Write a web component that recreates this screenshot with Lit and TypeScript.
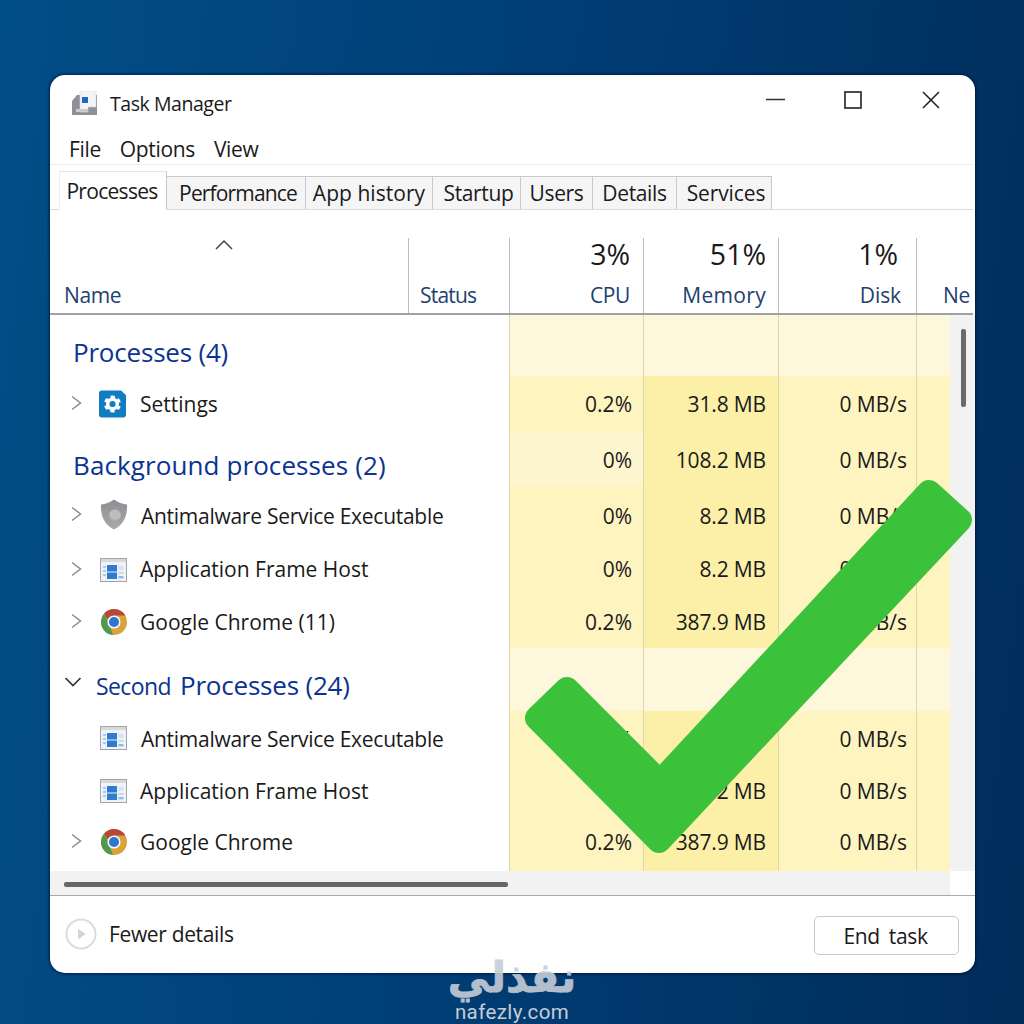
import { LitElement, html, css } from "lit";
import { customElement } from "lit/decorators.js";

const frameIcon = html`<svg class="ico" viewBox="0 0 27 24" width="27" height="24">
  <rect x="0" y="0" width="27" height="24" fill="#a3a5a8"/>
  <rect x="1" y="4" width="25" height="19" fill="#eef3f8"/>
  <rect x="1" y="1" width="25" height="3" fill="#d9d9d9"/>
  <rect x="7" y="7" width="10" height="6.5" fill="#2f7bd1"/>
  <rect x="7" y="14.5" width="10" height="6.5" fill="#2f7bd1"/>
  <rect x="3" y="8" width="3" height="2" fill="#a9cbec"/><rect x="3" y="12" width="3" height="2" fill="#a9cbec"/><rect x="3" y="16" width="3" height="2" fill="#a9cbec"/>
  <rect x="18.5" y="8" width="5" height="4" fill="#d6e4f2"/><rect x="18.5" y="14" width="5" height="2" fill="#c4d9ee"/><rect x="18.5" y="18" width="5" height="2.4" fill="#8fbbe6"/>
</svg>`;

const chromeIcon = html`<svg class="ico" viewBox="0 0 28 28" width="28" height="28">
  <circle cx="14" cy="14" r="13" fill="#d9a23a"/>
  <path d="M14 1A13 13 0 0 1 25.3 7.5L14 7.5 7.2 11 4.2 5.5A13 13 0 0 1 14 1Z" fill="#b5483a"/>
  <path d="M4.2 5.5 9.5 17.5 13 27A13 13 0 0 1 4.2 5.5Z" fill="#4f9a50"/>
  <circle cx="14" cy="14" r="6.6" fill="#f4f6f8"/>
  <circle cx="14" cy="14" r="5" fill="#2f74cf"/>
</svg>`;

const settingsIcon = html`<svg class="ico set" viewBox="0 0 28 28" width="27" height="28">
  <path d="M3 0H23L28 5V25a3 3 0 0 1-3 3H3a3 3 0 0 1-3-3V3a3 3 0 0 1 3-3Z" fill="#0f7cc4"/>
  <g transform="rotate(30 14 14)"><circle cx="14" cy="14" r="7.4" fill="none" stroke="#fff" stroke-width="2.8" stroke-dasharray="4.2 3.55" stroke-dashoffset="2.1"/></g>
  <circle cx="14" cy="14" r="5" fill="none" stroke="#fff" stroke-width="3.6"/>
</svg>`;

const shieldIcon = html`<svg class="ico" viewBox="0 0 28 31" width="28" height="31">
  <defs><linearGradient id="sh" x1="0" y1="0" x2="0" y2="1"><stop offset="0" stop-color="#8d8f92"/><stop offset="1" stop-color="#a8a9ab"/></linearGradient></defs>
  <path d="M14 0C18 3 23 4.500 27 5C27.500 16 24 25 14 30C4 25 .5 16 1 5C5 4.500 10 3 14 0Z" fill="url(#sh)"/>
  <circle cx="15" cy="15.500" r="5.800" fill="#bcbdbe"/>
  <path d="M9.500 17.500a6 6 0 0 0 11 0a7 7 0 0 1-11 0Z" fill="#a9aaac"/>
</svg>`;

const chevR = html`<svg class="chev" viewBox="0 0 12 16" width="12" height="16"><path d="M2 1.500 10.500 8 2 14.500" fill="none" stroke="#8a8a8a" stroke-width="1.500"/></svg>`;
const chevD = html`<svg class="chev" viewBox="0 0 18 12" width="18" height="12"><path d="M1.500 2 9 9.500 16.500 2" fill="none" stroke="#333" stroke-width="1.700"/></svg>`;

interface Row { icon?: unknown; name?: string; chev?: boolean; cpu?: string; mem?: string; disk?: string; tone?: string; adj?: string; tight?: boolean; }

const rows: Row[] = [
  { tone: "group", name: "Processes (4)" },
  { icon: settingsIcon, chev: true, name: "Settings", cpu: "0.2%", mem: "31.8 MB", disk: "0 MB/s" },
  { tone: "group2", adj: "a1", name: "Background processes (2)", cpu: "0%", mem: "108.2 MB", disk: "0 MB/s" },
  { icon: shieldIcon, chev: true, adj: "a1", tight: true, name: "Antimalware Service Executable", cpu: "0%", mem: "8.2 MB", disk: "0 MB/s" },
  { icon: frameIcon, chev: true, adj: "a2", name: "Application Frame Host", cpu: "0%", mem: "8.2 MB", disk: "0 MB/s" },
  { icon: chromeIcon, chev: true, name: "Google Chrome (11)", cpu: "0.2%", mem: "387.9 MB", disk: "0 MB/s" },
  { tone: "second" },
  { icon: frameIcon, adj: "a1", tight: true, name: "Antimalware Service Executable", cpu: "0%", mem: "8.2 MB", disk: "0 MB/s" },
  { icon: frameIcon, name: "Application Frame Host", cpu: "0%", mem: "8.2 MB", disk: "0 MB/s" },
  { icon: chromeIcon, chev: true, adj: "a3", name: "Google Chrome", cpu: "0.2%", mem: "387.9 MB", disk: "0 MB/s" },
];

@customElement("app-root")
export class AppRoot extends LitElement {
  static styles = css`
    :host {
      display: block; position: relative; width: 1024px; height: 1024px; overflow: hidden; box-sizing: border-box;
      padding: 75px 49px 51px 50px;
      background: linear-gradient(97deg, #024e88 0%, #01467f 25%, #003a70 60%, #002d5a 100%);
      font-family: "Open Sans", "Noto Sans", sans-serif; color: #1a1a1a; font-size: 21px; letter-spacing: -0.35px;
    }
    .win { width: 925px; height: 898px; background: #fff; border-radius: 15px; overflow: hidden; display: flex; flex-direction: column; box-shadow: 0 0 3px 1px rgba(0, 10, 50, .7); }
    .title { height: 55px; flex: none; display: flex; align-items: center; padding: 2px 35px 0 22px; box-sizing: border-box; font-size: 19.5px; letter-spacing: -0.45px; }
    .title .app { margin: -2px 13px 0 0; }
    .title .caps { margin-left: auto; display: flex; gap: 60px; align-items: center; margin-top: -7px; }
    .title .caps .min { margin-right: -2px; }
    .menu { height: 35px; flex: none; box-sizing: border-box; display: flex; gap: 19px; padding: 3px 0 0 19px; align-items: center; border-bottom: 1px solid #ececec; margin-right: 2px; }
    .tabs { height: 45px; flex: none; box-sizing: border-box; border-bottom: 1px solid #dcdcdc; display: grid; grid-template-columns: 108px 139px 127px 88px 72px 84px 95px; padding-left: 9px; align-items: end; margin-right: 2px; }
    .tab { height: 33px; box-sizing: border-box; background: #f5f5f5; border: 1px solid #c8c8c8; border-bottom: 0; border-left-width: 0; display: flex; align-items: center; justify-content: center; padding-bottom: 1px; }
    .tab.on { background: #fff; border: 0; border-top: 1px solid #e6e6e6; border-right: 1px solid #c8c8c8; border-left: 1px solid #eee; margin-bottom: -1px; padding: 0 2px 0 0; height: 39px; letter-spacing: -0.7px; }
    .tab.t1 { letter-spacing: -0.85px; padding-left: 4px; }
    .tab.t2 { letter-spacing: 0.05px; }
    .tab.t3 { padding-left: 4px; }
    .tab.t6 { letter-spacing: -0.1px; padding-left: 4px; }
    .head { height: 105px; flex: none; box-sizing: border-box; padding-top: 28px; margin-right: 2px; }
    .hgrid { display: grid; grid-template-columns: 358px 101px 134px 135px 138px 55px; height: 77px; border-bottom: 2px solid #a0a0a6; box-sizing: border-box; }
    .hc { position: relative; border-left: 1px solid #bdbdbd; display: flex; flex-direction: column; align-items: flex-end; justify-content: flex-end; padding: 0 13px 3px 0; box-sizing: border-box; }
    .hc:first-child { border-left: 0; align-items: flex-start; padding-left: 14px; }
    .hc .lab { color: #22406f; line-height: 30px; }
    .hc .pct { font-size: 28.5px; line-height: 32px; color: #1a1a1a; margin-bottom: 10px; letter-spacing: 0; }
    .hc.st { align-items: flex-start; padding-left: 11px; }
    .hc.st .lab { letter-spacing: -0.8px; }
    .hc.mem { padding-right: 12px; }
    .hc.mem .lab { letter-spacing: 0.3px; }
    .hc.disk { padding-right: 15px; }
    .hc.disk .lab { letter-spacing: -0.1px; }
    .hc.disk .pct { margin-right: 3px; }
    .hc.net { align-items: flex-start; padding-left: 26px; padding-right: 0; }
    .hc .caret { position: absolute; left: 165px; top: 1px; }
    .body { height: 556px; flex: none; display: flex; }
    .rows { display: grid; width: 900px; grid-template-rows: 61px 56px 54px 57px 53px 52px 63px 54px 51px 55px; letter-spacing: 0; }
    .row { display: grid; grid-template-columns: 358px 101px 134px 135px 138px 34px; }
    .row.a1 > * { padding-top: 2px; }
    .row.a2 > * { padding-bottom: 2px; }
    .row.a3 > * { padding-bottom: 4px; }
    .a3 .ico { margin-top: -2px; }
    .a3 .name .chev { margin-top: -11px; }
    .name { display: flex; align-items: center; position: relative; padding-left: 90px; white-space: nowrap; box-sizing: border-box; min-width: 0; }
    .name .tight { letter-spacing: -0.27px; margin-left: 1px; }
    .name .chev { position: absolute; left: 20px; top: 50%; margin-top: -9px; }
    .name .ico { position: absolute; left: 50px; top: 50%; transform: translateY(-50%); }
    .name .ico.set { left: 49px; }
    .gt { color: #0b3391; font-size: 26px; letter-spacing: -0.2px; position: absolute; left: 23px; top: 50%; transform: translateY(-50%); margin-top: 6px; line-height: 34px; }
    .group2 .gt { letter-spacing: 0.1px; }
    .gt .sm { font-size: 23px; letter-spacing: -0.6px; margin-right: 9px; }
    .second .gt { left: 46px; margin-top: 5px; letter-spacing: -0.2px; }
    .second .name .chev { left: 14px; margin-top: -4px; }
    .cell { border-left: 1px solid #dfd8a6; display: flex; align-items: center; justify-content: flex-end; background: #fdf4c0; white-space: nowrap; padding-right: 11px; box-sizing: border-box; }
    .cell.m { background: #fcf0a8; padding-right: 12px; letter-spacing: -0.15px; }
    .cell.d { padding-right: 9px; }
    .cell.n { padding-right: 0; }
    .pale .cell, .pale .cell.m { background: #fdf8db; }
    .group2 .cell.c { background: #fdf6cf; }
    .track { flex: 1; background: #f2f2f2; padding: 14px 0 0 11px; box-sizing: border-box; }
    .thumb { width: 5px; height: 78px; background: #6b6b6b; border-radius: 2px; }
    .hbar { height: 25px; flex: none; box-sizing: border-box; border-bottom: 1px solid #a9a9a9; display: flex; padding-top: 11px; position: relative; }
    .hbar::before { content: ""; position: absolute; left: 0; top: 0; width: 900px; height: 24px; background: #f2f2f2; }
    .hthumb { position: relative; margin-left: 14px; width: 444px; height: 5px; background: #666; border-radius: 2px; }
    .foot { flex: 1; display: flex; align-items: center; padding: 0 16px 1px 15px; box-sizing: border-box; }
    .foot svg { margin-right: 12px; }
    .btn { margin-left: auto; width: 145px; height: 39px; box-sizing: border-box; border: 1px solid #c9c9c9; border-radius: 5px; background: #fff; display: flex; align-items: center; justify-content: center; word-spacing: 4px; margin-top: 3px; padding-right: 2px; }
    .check { position: absolute; left: 0; top: 0; width: 1024px; height: 1024px; pointer-events: none; }
    .wm { position: absolute; left: 412px; top: 953px; width: 200px; height: 71px; display: flex; flex-direction: column; align-items: center; color: #c6cdd5; letter-spacing: 0; }
    .wm .ar { font-family: "DejaVu Sans", sans-serif; font-weight: 700; font-size: 42px; line-height: 50px; opacity: .9; -webkit-text-stroke: 0.8px #c6cdd5; }
    .wm .en { font-family: "Roboto", sans-serif; font-size: 20.5px; line-height: 18px; letter-spacing: .4px; }
  `;

  row(r: Row) {
    const pale = r.tone === "group" || r.tone === "second";
    return html`<div class="row ${pale ? "pale" : ""} ${r.tone ?? ""} ${r.adj ?? ""}">
      <div class="name">
        ${r.tone === "second"
          ? html`${chevD}<span class="gt"><span class="sm">Second</span>Processes (24)</span>`
          : r.tone
          ? html`<span class="gt">${r.name}</span>`
          : html`${r.chev ? chevR : ""}${r.icon}<span class="${r.tight ? "tight" : ""}">${r.name}</span>`}
      </div>
      <div></div>
      <div class="cell c">${r.cpu ?? ""}</div>
      <div class="cell m">${r.mem ?? ""}</div>
      <div class="cell d">${r.disk ?? ""}</div>
      <div class="cell n"></div>
    </div>`;
  }

  render() {
    return html`
      <div class="win">
        <div class="title">
          <svg class="app" viewBox="0 0 25 24" width="25" height="24">
            <path d="M5 4H25V24H0V10Z" fill="#8e9094"/>
            <path d="M8 0H24V16H16V21H8Z" fill="#f2f4f6" stroke="#d5d7da" stroke-width=".6"/>
            <rect x="10" y="6" width="6" height="6" fill="#1c68c8"/>
            <rect x="4" y="18" width="12" height="3" fill="#c9cbce"/>
          </svg>
          <span>Task Manager</span>
          <div class="caps">
            <svg class="min" viewBox="0 0 20 18" width="20" height="18"><path d="M0 8.500H19" stroke="#333" stroke-width="1.300"/></svg>
            <svg viewBox="0 0 18 18" width="18" height="18"><rect x="1" y="1" width="16" height="16" fill="none" stroke="#222" stroke-width="1.600"/></svg>
            <svg viewBox="0 0 18 18" width="18" height="18"><path d="M1 1 17 17M17 1 1 17" stroke="#222" stroke-width="1.600"/></svg>
          </div>
        </div>
        <div class="menu"><span>File</span><span>Options</span><span>View</span></div>
        <div class="tabs">
          ${["Processes", "Performance", "App history", "Startup", "Users", "Details", "Services"].map(
            (t, i) => html`<div class="tab t${i} ${i === 0 ? "on" : ""}">${t}</div>`
          )}
        </div>
        <div class="head">
          <div class="hgrid">
            <div class="hc"><svg class="caret" viewBox="0 0 18 11" width="18" height="11"><path d="M1 10 9 2 17 10" fill="none" stroke="#444" stroke-width="1.500"/></svg><span class="lab">Name</span></div>
            <div class="hc st"><span class="lab">Status</span></div>
            <div class="hc"><span class="pct">3%</span><span class="lab">CPU</span></div>
            <div class="hc mem"><span class="pct">51%</span><span class="lab">Memory</span></div>
            <div class="hc disk"><span class="pct">1%</span><span class="lab">Disk</span></div>
            <div class="hc net"><span class="lab">Ne</span></div>
          </div>
        </div>
        <div class="body">
          <div class="rows">${rows.map((r) => this.row(r))}</div>
          <div class="track"><div class="thumb"></div></div>
        </div>
        <div class="hbar"><div class="hthumb"></div></div>
        <div class="foot">
          <svg viewBox="0 0 32 32" width="32" height="32"><circle cx="16" cy="16" r="14.500" fill="#fff" stroke="#dcdcdc" stroke-width="2"/><path d="M13 10.500 20.500 16 13 21.500Z" fill="#d4d4d4"/></svg>
          <span>Fewer details</span>
          <div class="btn">End task</div>
        </div>
      </div>
      <svg class="check" viewBox="0 0 1024 1024">
        <polygon points="537,718 567,689 660,782 929,492 960,520 659,841" fill="#3cc13b" stroke="#3cc13b" stroke-width="24" stroke-linejoin="round"/>
      </svg>
      <div class="wm"><span class="ar" lang="ar" dir="rtl">نفذلي</span><span class="en">nafezly.com</span></div>
    `;
  }
}
